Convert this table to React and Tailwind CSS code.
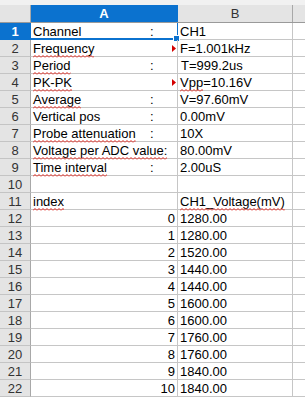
import React from "react";

const info = [
  { label: "Channel", value: "CH1", colon: true },
  { label: "Frequency", value: "F=1.001kHz", spell: true, clipped: true },
  { label: "Period", value: "T=999.2us", spell: true, colon: true, pad: true },
  { label: "PK-PK", value: "Vpp=10.16V", spell: true, clipped: true, valueSpell: "Vpp" },
  { label: "Average", value: "V=97.60mV", spell: true, colon: true },
  { label: "Vertical pos", value: "0.00mV", colon: true },
  { label: "Probe attenuation", value: "10X", spell: true, colon: true },
  { label: "Voltage per ADC value:", value: "80.00mV", spell: true },
  { label: "Time interval", value: "2.00uS", spell: true, colon: true },
];

const samples = [1280, 1280, 1520, 1440, 1440, 1600, 1600, 1760, 1760, 1840, 1840];

// red squiggle used by the spell checker
function Wavy({ children }) {
  return (
    <span className="relative inline-block">
      {children}
      <svg className="absolute left-0 bottom-[-3px] w-full h-[3px]" preserveAspectRatio="none">
        <defs>
          <pattern id="squiggle" width="4" height="3" patternUnits="userSpaceOnUse">
            <path d="M0 2.5 L2 0.5 L4 2.5" fill="none" stroke="#e2231a" strokeWidth="1" />
          </pattern>
        </defs>
        <rect width="100%" height="3" fill="url(#squiggle)" />
      </svg>
    </span>
  );
}

function RowHead({ n, active }) {
  return (
    <div
      className={`h-[17px] w-[31px] border-r border-b flex items-center justify-center text-[13px] leading-none ${
        active
          ? "bg-[#0b72cf] text-white font-bold border-r-[#0b72cf] border-b-[#0b72cf]"
          : "bg-[#e4e4e4] text-[#333] border-r-[#a8a8a8] border-b-[#c4c4c4]"
      }`}
    >
      {n}
    </div>
  );
}

function Row({ n, active, a, b, children }) {
  return (
    <div className="flex">
      <RowHead n={n} active={active} />
      <div className="relative h-[17px] w-[147px] border-r border-b border-[#c6c6c6] px-[2px] flex items-center text-[13px] leading-none whitespace-nowrap">
        {a}
        {children}
      </div>
      <div className="h-[17px] w-[115px] border-r border-b border-[#c6c6c6] px-[2px] flex items-center text-[13px] leading-none whitespace-nowrap">
        {b}
      </div>
      <div className="h-[17px] flex-1 border-b border-[#c6c6c6]" />
    </div>
  );
}

function ClipMark() {
  return (
    <svg className="absolute right-[1px] top-[5px]" width="4" height="7" viewBox="0 0 4 7">
      <polygon points="0,0 4,3.5 0,7" fill="#d40000" />
    </svg>
  );
}

export default function App() {
  return (
    <div className="w-[305px] h-[400px] overflow-hidden bg-white text-black font-['Liberation_Sans',Arial,sans-serif]">
      <div className="h-[5px] bg-[#f1f1f1]" />
      {/* column headers */}
      <div className="flex h-[18px] border-b border-[#9a9a9a] text-[13px] leading-none">
        <div className="w-[31px] bg-[#e4e4e4] border-r border-[#a8a8a8]" />
        <div className="w-[147px] bg-[#0b72cf] text-white font-bold flex items-center justify-center border-r border-[#0b72cf]">
          A
        </div>
        <div className="w-[115px] bg-[#e4e4e4] text-[#333] flex items-center justify-center border-r border-[#a8a8a8]">
          B
        </div>
        <div className="flex-1 bg-[#e4e4e4]" />
      </div>

      {info.map((r, i) => {
        const label = r.spell ? <Wavy>{r.label}</Wavy> : r.label;
        let value = r.value;
        if (r.valueSpell) {
          value = (
            <>
              <Wavy>{r.valueSpell}</Wavy>
              {r.value.slice(r.valueSpell.length)}
            </>
          );
        }
        return (
          <Row
            key={r.label}
            n={i + 1}
            active={i === 0}
            a={
              <>
                <span className="inline-block w-[117px]">{label}</span>
                {r.colon && <span>:</span>}
              </>
            }
            b={r.pad ? <span className="pl-[1px]">{value}</span> : value}
          >
            {r.clipped && <ClipMark />}
            {i === 0 && (
              <>
                <div className="absolute left-0 right-0 bottom-[-1px] h-[2px] bg-[#0b72cf]" />
                <div className="absolute right-[-1px] top-0 bottom-0 w-[1px] bg-[#0b72cf]" />
                <div className="absolute right-[-3px] bottom-[-3px] w-[5px] h-[5px] bg-[#0b72cf] border border-white box-content" />
              </>
            )}
          </Row>
        );
      })}

      <Row n={10} a="" b="" />
      <Row n={11} a={<Wavy>index</Wavy>} b={<Wavy>CH1_Voltage(mV)</Wavy>} />
      {samples.map((v, i) => (
        <Row key={i} n={12 + i} a={<span className="ml-auto">{i}</span>} b={v.toFixed(2)} />
      ))}
    </div>
  );
}
